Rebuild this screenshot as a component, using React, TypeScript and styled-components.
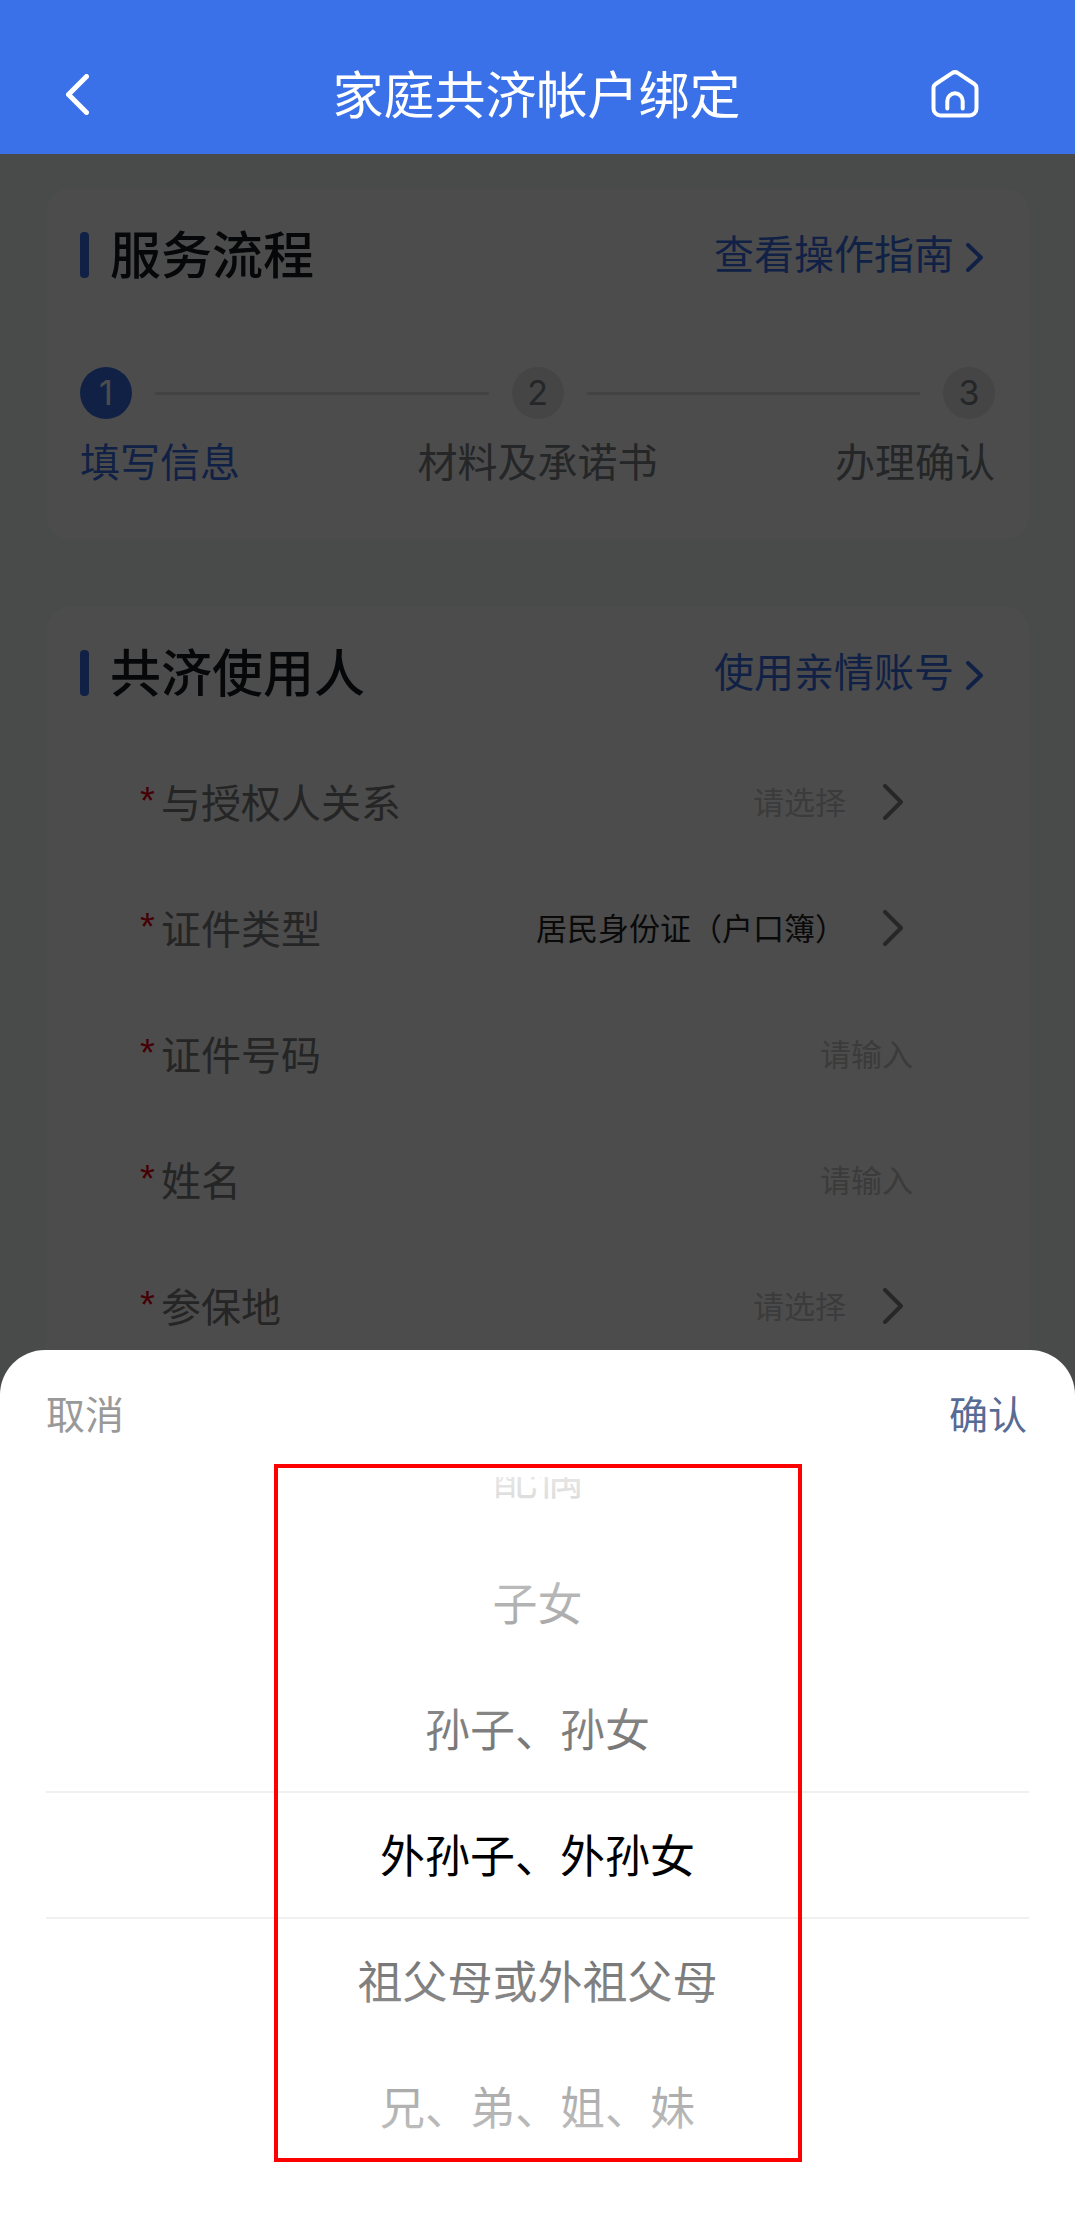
import React, { useState } from 'react';
import styled, { createGlobalStyle } from 'styled-components';

const BLUE = '#3a71e8';
const FONT = '"Noto Sans CJK SC", "Liberation Sans", sans-serif';
const ROW = 126;

const GlobalStyle = createGlobalStyle`
  *, *::before, *::after { box-sizing: border-box; }
  body { margin: 0; background: #fff; font-family: ${FONT}; }
  button, input, select { font-family: inherit; margin: 0; }
  h1, h2, ol, p { margin: 0; padding: 0; }
`;

const Page = styled.div`
  position: relative;
  display: flex;
  flex-direction: column;
  min-height: 100vh;
  margin-right: 5px;
  overflow: hidden;
`;

const Header = styled.header`
  display: grid;
  grid-template-columns: 1fr auto 1fr;
  align-items: center;
  height: 154px;
  padding: 34px 96px 0 66px;
  background: ${BLUE};
  color: #fff;
`;

const Heading = styled.h1`
  grid-column: 2;
  margin-left: 28px;
  padding-bottom: 4px;
  font-size: 51px;
  line-height: 72px;
  font-weight: 400;
`;

const IconButton = styled.button<{ $end?: boolean }>`
  display: flex;
  justify-self: ${(p) => (p.$end ? 'end' : 'start')};
  padding: 0;
  border: 0;
  background: none;
  color: inherit;
`;

const Body = styled.main`
  position: relative;
  flex: 1;
  display: flex;
  flex-direction: column;
  gap: 68px;
  padding: 35px 46px 0;
  background: #f0faf4;
`;

const Scrim = styled.div`
  position: absolute;
  inset: 0;
  background: rgba(0, 0, 0, 0.7);
`;

const Card = styled.section<{ $fill?: boolean }>`
  flex: ${(p) => (p.$fill ? '1' : 'none')};
  padding: 0 34px 51px;
  border-radius: 24px;
  background: #fff;
`;

const CardHead = styled.div`
  display: flex;
  align-items: center;
  height: 132px;
`;

const Accent = styled.span`
  width: 9px;
  height: 46px;
  margin-right: 21px;
  border-radius: 4px;
  background: ${BLUE};
`;

const CardTitle = styled.h2`
  flex: 1;
  padding-bottom: 6px;
  font-size: 51px;
  line-height: 72px;
  font-weight: 500;
  color: #17191f;
`;

const CardLink = styled.a`
  display: flex;
  align-items: center;
  gap: 12px;
  padding: 0 12px 6px 0;
  font-size: 40px;
  line-height: 56px;
  color: ${BLUE};
  text-decoration: none;

  svg { margin-top: 10px; }
`;

const Track = styled.div`
  display: flex;
  align-items: center;
  gap: 23px;
  margin-top: 46px;
`;

const Dot = styled.span<{ $active?: boolean }>`
  display: flex;
  align-items: center;
  justify-content: center;
  width: 52px;
  height: 52px;
  border-radius: 50%;
  background: ${(p) => (p.$active ? BLUE : '#e6e6ec')};
  color: ${(p) => (p.$active ? '#fff' : '#7a8086')};
  font: 400 34px/52px Inter, sans-serif;
`;

const Line = styled.span`
  flex: 1;
  height: 3px;
  background: #e2e2e2;
`;

const StepNames = styled.ol`
  display: flex;
  justify-content: space-between;
  margin-top: 13px;
  list-style: none;
`;

const StepName = styled.li<{ $active?: boolean }>`
  font-size: 40px;
  line-height: 56px;
  color: ${(p) => (p.$active ? BLUE : '#7a8086')};
`;

const Form = styled.form`
  padding: 0 82px 0 60px;
`;

const Field = styled.div`
  display: flex;
  align-items: center;
  height: ${ROW}px;
`;

const FieldLabel = styled.label`
  flex: none;
  display: flex;
  align-items: center;
  padding-bottom: 2px;
  font-size: 40px;
  line-height: 56px;
  color: #7c7c7c;
`;

const Required = styled.span`
  width: 21px;
  font-family: "Liberation Sans", sans-serif;
  font-size: 38px;
  color: #e60012;
`;

const TextBox = styled.input`
  flex: 1;
  min-width: 0;
  padding: 0 0 2px;
  border: 0;
  outline: 0;
  background: none;
  font-size: 31px;
  line-height: 48px;
  text-align: right;
  color: #222;

  &::placeholder { color: #c6c6c6; opacity: 1; }
`;

const SelectBox = styled.select<{ $empty?: boolean }>`
  flex: 1;
  min-width: 0;
  padding: 0 0 2px;
  border: 0;
  outline: 0;
  appearance: none;
  background: none;
  font-size: 31px;
  line-height: 48px;
  text-align: right;
  text-align-last: right;
  color: ${(p) => (p.$empty ? '#c6c6c6' : '#222')};
`;

const Arrow = styled.span`
  display: flex;
  padding: 0 10px 0 37px;
  color: #828282;
`;

const Sheet = styled.div`
  position: absolute;
  left: 0;
  right: 0;
  bottom: 0;
  border-radius: 45px 45px 0 0;
  background: #fff;
`;

const SheetBar = styled.div`
  display: flex;
  align-items: center;
  justify-content: space-between;
  height: 127px;
  padding: 0 48px 4px 46px;
`;

const SheetAction = styled.button<{ $primary?: boolean }>`
  padding: 0;
  border: 0;
  background: none;
  font-size: 39px;
  line-height: 56px;
  color: ${(p) => (p.$primary ? '#576b95' : '#999')};
`;

const Wheel = styled.div`
  position: relative;
  height: ${ROW * 6}px;
  overflow: hidden;
`;

const WheelList = styled.div`
  display: flex;
  flex-direction: column;
`;

const WheelItem = styled.button`
  flex: none;
  height: ${ROW}px;
  padding: 0 0 2px;
  border: 0;
  background: none;
  font-size: 45px;
  line-height: 64px;
  color: #000;
`;

const Shade = styled.div<{ $side: 'top' | 'bottom' }>`
  position: absolute;
  left: 46px;
  right: 46px;
  ${(p) => p.$side}: 0;
  height: 316px;
  border-${(p) => (p.$side === 'top' ? 'bottom' : 'top')}: 2px solid #f0f0f0;
  background: linear-gradient(
    to ${(p) => p.$side},
    rgba(255, 255, 255, 0.4),
    rgba(255, 255, 255, 0.9)
  );
  pointer-events: none;
`;

const Marker = styled.div`
  position: absolute;
  top: 114px;
  bottom: 71px;
  left: 50%;
  width: 528px;
  margin-left: -264px;
  border: 4px solid #fe0000;
  pointer-events: none;
`;

function Chevron({ w, h, stroke, left }: { w: number; h: number; stroke: number; left?: boolean }) {
  const s = stroke / 2;
  const points = left
    ? `${w - s},${s} ${s},${h / 2} ${w - s},${h - s}`
    : `${s},${s} ${w - s},${h / 2} ${s},${h - s}`;
  return (
    <svg width={w} height={h} viewBox={`0 0 ${w} ${h}`} fill="none" aria-hidden="true">
      <polyline points={points} stroke="currentColor" strokeWidth={stroke} strokeLinecap="round" strokeLinejoin="round" />
    </svg>
  );
}

function HomeIcon() {
  return (
    <svg width="48" height="48" viewBox="0 0 48 48" fill="none" stroke="currentColor" strokeWidth="4" strokeLinecap="round" strokeLinejoin="round" aria-hidden="true">
      <path d="M2.500 18a5 5 0 0 1 2.200-4L21 3.200a5.200 5.200 0 0 1 6 0L43.300 14a5 5 0 0 1 2.200 4V38.500a7 7 0 0 1-7 7h-29a7 7 0 0 1-7-7z" />
      <path d="M16.300 38.500v-7.500a7.700 7.700 0 0 1 15.400 0v7.500" />
    </svg>
  );
}

type FieldDef = { id: string; label: string; kind: 'select' | 'text'; value?: string };

const FIELDS: FieldDef[] = [
  { id: 'relation', label: '与授权人关系', kind: 'select' },
  { id: 'idType', label: '证件类型', kind: 'select', value: '居民身份证（户口簿）' },
  { id: 'idNumber', label: '证件号码', kind: 'text' },
  { id: 'name', label: '姓名', kind: 'text' },
  { id: 'region', label: '参保地', kind: 'select' },
];

const STEPS = ['填写信息', '材料及承诺书', '办理确认'];
const RELATIONS = ['配偶', '子女', '孙子、孙女', '外孙子、外孙女', '祖父母或外祖父母', '兄、弟、姐、妹'];

function SectionHead({ title, link }: { title: string; link: string }) {
  return (
    <CardHead>
      <Accent />
      <CardTitle>{title}</CardTitle>
      <CardLink href="#">
        {link}
        <Chevron w={17} h={29} stroke={4} />
      </CardLink>
    </CardHead>
  );
}

export default function App() {
  const [selected, setSelected] = useState(3);

  return (
    <>
      <GlobalStyle />
      <Page>
        <Header>
          <IconButton type="button" aria-label="返回">
            <Chevron left w={23} h={41} stroke={5} />
          </IconButton>
          <Heading>家庭共济帐户绑定</Heading>
          <IconButton type="button" $end aria-label="首页">
            <HomeIcon />
          </IconButton>
        </Header>

        <Body>
          <Card>
            <SectionHead title="服务流程" link="查看操作指南" />
            <Track>
              {STEPS.map((step, i) => (
                <React.Fragment key={step}>
                  {i > 0 && <Line />}
                  <Dot $active={i === 0}>{i + 1}</Dot>
                </React.Fragment>
              ))}
            </Track>
            <StepNames>
              {STEPS.map((step, i) => (
                <StepName key={step} $active={i === 0}>{step}</StepName>
              ))}
            </StepNames>
          </Card>

          <Card $fill>
            <SectionHead title="共济使用人" link="使用亲情账号" />
            <Form>
              {FIELDS.map((f) => (
                <Field key={f.id}>
                  <FieldLabel htmlFor={f.id}>
                    <Required>*</Required>
                    {f.label}
                  </FieldLabel>
                  {f.kind === 'text' ? (
                    <TextBox id={f.id} type="text" placeholder="请输入" />
                  ) : (
                    <>
                      <SelectBox id={f.id} $empty={!f.value}>
                        <option>{f.value ?? '请选择'}</option>
                      </SelectBox>
                      <Arrow>
                        <Chevron w={20} h={36} stroke={4} />
                      </Arrow>
                    </>
                  )}
                </Field>
              ))}
            </Form>
          </Card>
          <Scrim />
        </Body>

        <Sheet role="dialog" aria-label="与授权人关系">
          <SheetBar>
            <SheetAction type="button">取消</SheetAction>
            <SheetAction type="button" $primary>确认</SheetAction>
          </SheetBar>
          <Wheel>
            <WheelList role="listbox" style={{ marginTop: ROW * (2.5 - selected) }}>
              {RELATIONS.map((r, i) => (
                <WheelItem key={r} type="button" role="option" aria-selected={i === selected} onClick={() => setSelected(i)}>
                  {r}
                </WheelItem>
              ))}
            </WheelList>
            <Shade $side="top" />
            <Shade $side="bottom" />
          </Wheel>
          <Marker />
        </Sheet>
      </Page>
    </>
  );
}
